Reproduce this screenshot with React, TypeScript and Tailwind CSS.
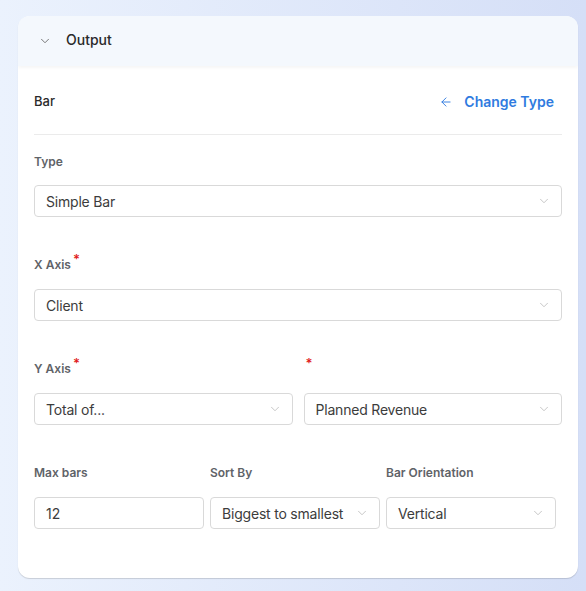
import { ChevronDown, ArrowLeft } from "lucide-react";

function Label({ text, required }: { text: string; required?: boolean }) {
  return (
    <div className="flex h-[18px] items-end text-[12px] font-semibold text-[#5f6368]">
      {text}
      {required && <span className="relative -top-[5px] ml-[2px] text-[13px] text-[#e11d1d]">*</span>}
    </div>
  );
}

function Select({ value, className = "" }: { value: string; className?: string }) {
  return (
    <div
      className={`flex h-[32px] items-center justify-between rounded-[4px] border border-[#d9d9d9] bg-white pl-[11px] pr-[10px] text-[14px] text-[#3c3c3c] ${className}`}
    >
      <span className="tracking-[-0.2px]">{value}</span>
      <ChevronDown size={14} strokeWidth={1.3} className="text-[#b5b5b5]" />
    </div>
  );
}

export default function App() {
  return (
    <div
      className="min-h-[591px] bg-gradient-to-r from-[#ebf2fd] to-[#d5dff7] pl-[18px] pr-[8px] pt-[16px] pb-[13px] text-[#262626]"
      style={{ fontFamily: "Inter, 'Noto Sans', sans-serif" }}
    >
      <div className="overflow-hidden rounded-[12px] bg-white shadow-[0_1px_1px_rgba(0,0,0,0.15)]">
        <div className="flex h-[50px] items-center gap-[14px] bg-[#f4f8fd] pb-[3px] pl-[20px] shadow-[0_2px_3px_rgba(0,0,0,0.04)]">
          <ChevronDown size={14} strokeWidth={1.5} className="mt-[3px] text-[#666]" />
          <span className="text-[14px] font-medium text-[#2a2a2a]">Output</span>
        </div>
        <div className="px-[16px] pb-[49px]">
          <div className="flex h-[69px] items-center justify-between border-b border-[#ebebeb] pt-[3px]">
            <span className="text-[13px] font-medium text-[#2a2a2a]">Bar</span>
            <span className="flex items-center gap-[11px] pr-[8px] text-[14px] font-semibold text-[#2f7be0]">
              <ArrowLeft size={14} strokeWidth={1.6} />
              Change Type
            </span>
          </div>

          <div className="mt-[18px]">
            <Label text="Type" />
            <Select value="Simple Bar" className="mt-[14px]" />
          </div>

          <div className="mt-[39px]">
            <Label text="X Axis" required />
            <Select value="Client" className="mt-[15px]" />
          </div>

          <div className="mt-[39px]">
            <div className="flex gap-[11px]">
              <div className="flex-1">
                <Label text="Y Axis" required />
              </div>
              <div className="flex-1">
                <Label text="" required />
              </div>
            </div>
            <div className="mt-[15px] flex gap-[11px]">
              <Select value="Total of..." className="flex-1" />
              <Select value="Planned Revenue" className="flex-1" />
            </div>
          </div>

          <div className="mt-[39px] grid w-[522px] grid-cols-3 gap-x-[6px]">
            <Label text="Max bars" />
            <Label text="Sort By" />
            <Label text="Bar Orientation" />
            <div className="mt-[15px] flex h-[32px] items-center rounded-[4px] border border-[#d9d9d9] bg-white pl-[11px] text-[14px] text-[#3c3c3c]">
              12
            </div>
            <Select value="Biggest to smallest" className="mt-[15px]" />
            <Select value="Vertical" className="mt-[15px]" />
          </div>
        </div>
      </div>
    </div>
  );
}
